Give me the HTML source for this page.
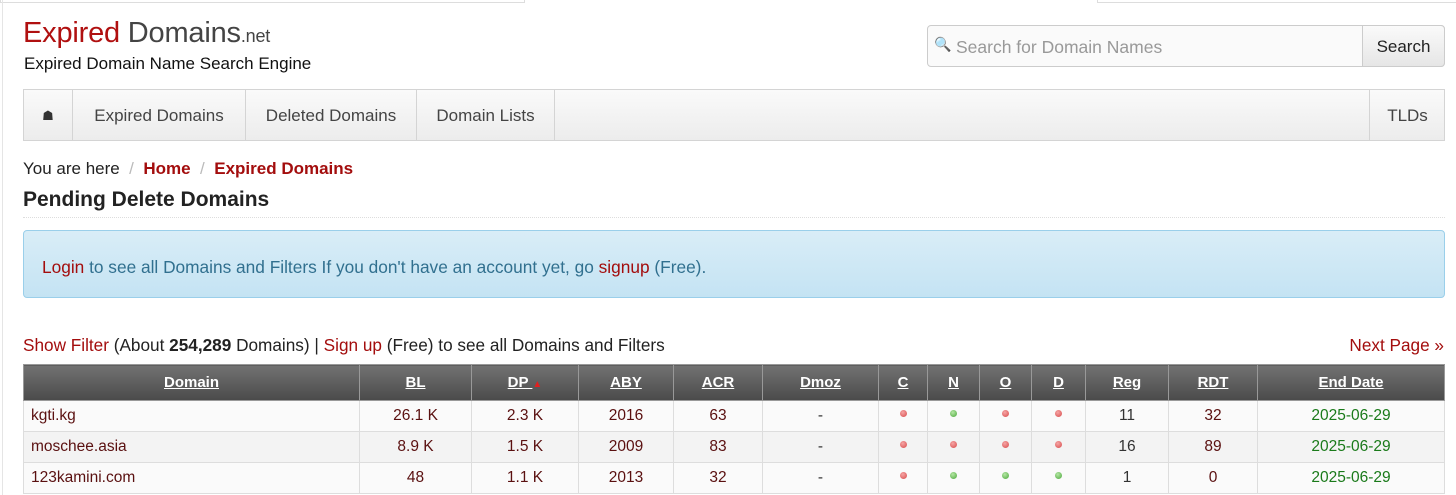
<!DOCTYPE html>
<html style="overflow:hidden"><head><meta charset="utf-8"><style>
*{box-sizing:border-box;margin:0;padding:0}
html,body{width:1456px;height:495px;overflow:hidden}
body{background:#fff;font-family:"Liberation Sans",sans-serif;color:#222;position:relative;font-size:16px}
.a{position:absolute;white-space:nowrap}
.red{color:#a30d0d}
.topline{position:absolute;top:0;left:0;width:525px;height:3px;border:1px solid #ddd;border-top:none}
.topline2{position:absolute;top:0;left:1097px;width:359px;height:3px;border-bottom:1px solid #ddd;border-left:1px solid #ddd}
.nav{position:absolute;left:23px;top:89px;width:1422px;height:52px;border:1px solid #d4d4d4;background:linear-gradient(#fafafa,#ececec)}
.nav div{position:absolute;top:0;height:50px;line-height:52px;border-right:1px solid #d4d4d4;color:#444;font-size:17px;text-align:center}
table{position:absolute;left:23px;top:364px;width:1422px;border-collapse:collapse;font-size:15.5px;border-bottom:1px solid #ddd}
th{height:36px;background:linear-gradient(#727272,#4a4a4a);color:#fff;text-decoration:underline;font-weight:bold;border:1px solid #999;font-size:15px}
td{height:31px;border:1px solid #ddd;text-align:center;color:#5a1010;padding:0 8px}
tr:nth-child(odd) td{background:#f3f3f3}
tr:nth-child(even) td{background:#fafafa}
td.l{text-align:left;padding-left:7px}
td.g{color:#1a7a1a}
td.k{color:#333}
.d{display:inline-block;width:7px;height:7px;border-radius:50%;vertical-align:middle;position:relative;top:-2px}
.r{background:radial-gradient(circle at 40% 35%,#f5a5a5,#d84a4a)}
.gr{background:radial-gradient(circle at 40% 35%,#b5e6a5,#4aa83a)}
</style></head><body>
<div class="topline"></div><div class="topline2"></div>
<div style="position:absolute;left:0;top:0;width:3px;height:495px;border-right:1px solid #e5e5e5"></div>
<div class="a" style="left:23px;top:17px;font-size:29px;letter-spacing:-0.2px"><span style="color:#b01010">Expired</span> <span style="color:#444">Domains</span><span style="color:#444;font-size:18px">.net</span></div>
<div class="a" style="left:24px;top:54px;font-size:17px;color:#111">Expired Domain Name Search Engine</div>
<div style="position:absolute;left:927px;top:25px;width:518px;height:42px;border:1px solid #ccc;border-radius:4px;background:#fafafa"></div>
<div class="a" style="left:934px;top:36px;font-size:14px;color:#999">&#128269;</div>
<div class="a" style="left:956px;top:37px;font-size:17.5px;color:#999">Search for Domain Names</div>
<div style="position:absolute;left:1362px;top:25px;width:83px;height:42px;border:1px solid #ccc;border-radius:0 4px 4px 0;background:linear-gradient(#fafafa,#e6e6e6);text-align:center;line-height:42px;font-size:17px;color:#222">Search</div>
<div class="nav">
<div style="left:0;width:49px;font-size:13px;color:#333">&#9751;</div>
<div style="left:49px;width:173px">Expired Domains</div>
<div style="left:222px;width:171px">Deleted Domains</div>
<div style="left:393px;width:138px">Domain Lists</div>
<div style="left:1345px;width:76px;border-right:none;border-left:1px solid #d4d4d4">TLDs</div>
</div>
<div class="a" style="left:23px;top:159px;font-size:17px">You are here <span style="color:#bbb">&nbsp;/&nbsp;</span> <b class="red">Home</b> <span style="color:#bbb">&nbsp;/&nbsp;</span> <b class="red">Expired Domains</b></div>
<div class="a" style="left:23px;top:188px;font-size:21px;font-weight:bold;color:#222">Pending Delete Domains</div>
<div style="position:absolute;left:23px;top:217px;width:1422px;border-top:1px dotted #ddd"></div>
<div style="position:absolute;left:23px;top:230px;width:1422px;height:68px;background:linear-gradient(#d9edf7,#c4e3f3);border:1px solid #9acfea;border-radius:4px"></div>
<div class="a" style="left:42px;top:257px;font-size:17.3px;color:#31708f"><span class="red">Login</span> to see all Domains and Filters If you don't have an account yet, go <span class="red">signup</span> (Free).</div>
<div class="a" style="left:23px;top:335px;font-size:17.2px;color:#222"><span class="red">Show Filter</span> (About <b>254,289</b> Domains) | <span class="red">Sign up</span> (Free) to see all Domains and Filters</div>
<div class="a red" style="right:12px;top:335px;font-size:17.2px">Next Page »</div>
<table>
<tr><th style="width:336px">Domain</th><th style="width:112px">BL</th><th style="width:107px">DP <span style="color:#e02020;font-size:10px;display:inline-block;text-decoration:none">&#9650;</span></th><th style="width:95px">ABY</th><th style="width:89px">ACR</th><th style="width:116px">Dmoz</th><th style="width:49px">C</th><th style="width:52px">N</th><th style="width:52px">O</th><th style="width:54px">D</th><th style="width:83px">Reg</th><th style="width:89px">RDT</th><th>End Date</th></tr>
<tr><td class="l">kgti.kg</td><td>26.1 K</td><td>2.3 K</td><td>2016</td><td>63</td><td class="k">-</td><td><i class="d r"></i></td><td><i class="d gr"></i></td><td><i class="d r"></i></td><td><i class="d r"></i></td><td class="k">11</td><td>32</td><td class="g">2025-06-29</td></tr>
<tr><td class="l">moschee.asia</td><td>8.9 K</td><td>1.5 K</td><td>2009</td><td>83</td><td class="k">-</td><td><i class="d r"></i></td><td><i class="d r"></i></td><td><i class="d r"></i></td><td><i class="d r"></i></td><td class="k">16</td><td>89</td><td class="g">2025-06-29</td></tr>
<tr><td class="l">123kamini.com</td><td>48</td><td>1.1 K</td><td>2013</td><td>32</td><td class="k">-</td><td><i class="d r"></i></td><td><i class="d gr"></i></td><td><i class="d gr"></i></td><td><i class="d gr"></i></td><td class="k">1</td><td>0</td><td class="g">2025-06-29</td></tr>
</table>
</body></html>
